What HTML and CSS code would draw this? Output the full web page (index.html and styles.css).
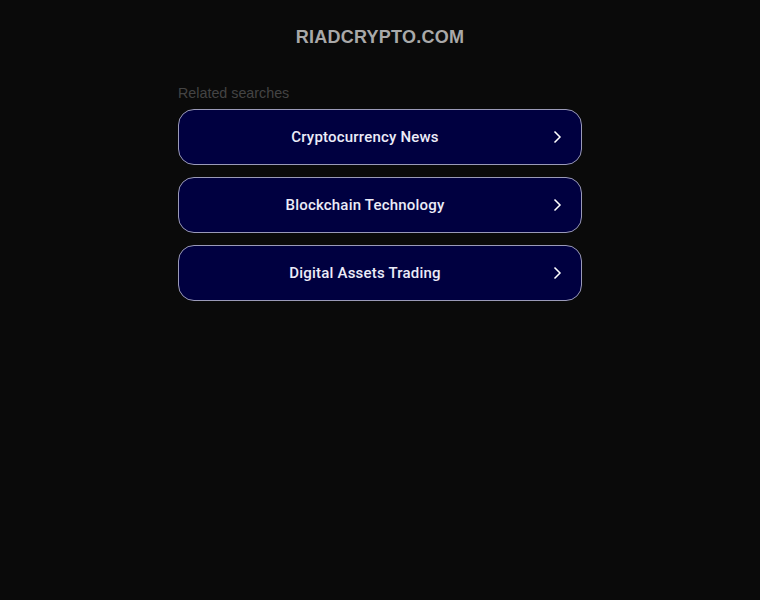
FILE: index.html
```html
<!DOCTYPE html>
<html>
<head>
<meta charset="utf-8">
<link rel="stylesheet" href="styles.css">
</head>
<body>
<div class="page">
  <h1 class="domain">RIADCRYPTO.COM</h1>
  <div class="related">
    <div class="label">Related searches</div>
    <a class="item" href="#"><span class="text">Cryptocurrency News</span><svg class="arrow" width="10" height="14" viewBox="0 0 10 14"><path d="M2.5 1.5 L8 7 L2.5 12.5" fill="none" stroke="#fff" stroke-width="1.5"/></svg></a>
    <a class="item" href="#"><span class="text">Blockchain Technology</span><svg class="arrow" width="10" height="14" viewBox="0 0 10 14"><path d="M2.5 1.5 L8 7 L2.5 12.5" fill="none" stroke="#fff" stroke-width="1.5"/></svg></a>
    <a class="item" href="#"><span class="text">Digital Assets Trading</span><svg class="arrow" width="10" height="14" viewBox="0 0 10 14"><path d="M2.5 1.5 L8 7 L2.5 12.5" fill="none" stroke="#fff" stroke-width="1.5"/></svg></a>
  </div>
</div>
</body>
</html>
```
FILE: styles.css
```css
html, body {
  margin: 0;
  padding: 0;
  background: #0a0a0a;
  height: 100%;
}
body {
  font-family: "Liberation Sans", Arial, sans-serif;
}
.page {
  display: flex;
  flex-direction: column;
  align-items: center;
  padding-top: 26px;
}
.domain {
  margin: 0;
  font-size: 18px;
  font-weight: bold;
  letter-spacing: 0.25px;
  color: #a9a9a9;
  line-height: 22px;
}
.related {
  width: 404px;
  margin-top: 36px;
  display: flex;
  flex-direction: column;
  gap: 12px;
}
.label {
  color: #444;
  font-size: 14.3px;
  line-height: 18px;
  margin-bottom: -5px;
}
.item {
  box-sizing: border-box;
  height: 56px;
  display: flex;
  align-items: center;
  justify-content: center;
  position: relative;
  background: #000040;
  border: 1px solid #9a9ab8;
  border-radius: 16px;
  text-decoration: none;
  padding-right: 30px;
}
.text {
  font-family: Roboto, "Liberation Sans", sans-serif;
  color: #ececf8;
  font-size: 15px;
  font-weight: 500;
  letter-spacing: 0.2px;
}
.arrow {
  position: absolute;
  right: 19px;
  top: 20px;
}
```
